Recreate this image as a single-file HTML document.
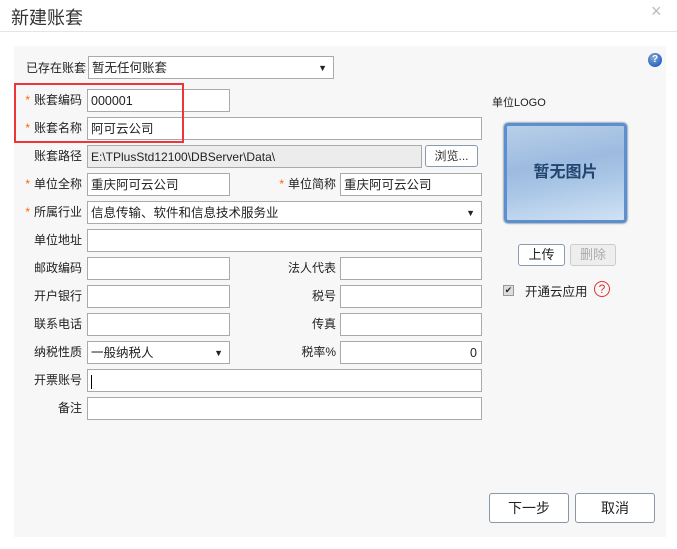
<!DOCTYPE html><html><head><meta charset="utf-8"><style>
*{box-sizing:border-box;margin:0;padding:0}
body{width:677px;height:549px;background:#fff;font-family:"Liberation Sans","Noto Sans CJK SC",sans-serif;font-size:12px;color:#222;position:relative;overflow:hidden}
.a{position:absolute}
.t{font-size:18px;color:#333;left:11px;top:4px}
.hr{left:0;top:31px;width:677px;height:1px;background:#e5e5e5}
.p{left:14px;top:46px;width:652px;height:491px;background:#f7f7f7}
.i{position:absolute;background:#fff;border:1px solid #aaa;height:23px;line-height:22px;padding-left:3px;font-size:12.5px}
.l{position:absolute;text-align:right;line-height:22px;font-size:12px;color:#222}
.s{color:#f60;margin-right:4px}
.arr{position:absolute;right:6px;top:0;font-size:9px}
.b{position:absolute;border:1px solid #8a9bb0;border-radius:3px;background:#fff;text-align:center}
</style></head><body>
<div class="a t">新建账套</div>
<div class="a" style="left:651px;top:1px;font-size:18px;color:#bbb">×</div>
<div class="a hr"></div>
<div class="a p"></div>
<div class="a" style="left:648px;top:53px;width:14px;height:14px;border-radius:50%;background:radial-gradient(circle at 40% 35%,#8ac 0,#2a66c8 70%);color:#fff;font-size:10px;font-weight:bold;text-align:center;line-height:14px">?</div>

<div class="l" style="left:14px;width:72px;top:57px">已存在账套</div>
<div class="i" style="left:88px;top:56px;width:246px">暂无任何账套<span class="arr">▼</span></div>

<div class="l" style="left:14px;width:68px;top:89px"><span class="s">*</span>账套编码</div>
<div class="i" style="left:87px;top:89px;width:143px">000001</div>
<div class="l" style="left:14px;width:68px;top:117px"><span class="s">*</span>账套名称</div>
<div class="i" style="left:87px;top:117px;width:395px">阿可云公司</div>
<div class="a" style="left:14px;top:83px;width:170px;height:60px;border:2px solid #f0353a"></div>

<div class="l" style="left:14px;width:68px;top:145px">账套路径</div>
<div class="i" style="left:87px;top:145px;width:335px;background:#ececec;font-size:12px">E:\TPlusStd12100\DBServer\Data\</div>
<div class="b" style="left:425px;top:145px;width:53px;height:22px;line-height:20px;color:#333">浏览...</div>

<div class="l" style="left:14px;width:68px;top:173px"><span class="s">*</span>单位全称</div>
<div class="i" style="left:87px;top:173px;width:143px">重庆阿可云公司</div>
<div class="l" style="left:260px;width:76px;top:173px"><span class="s">*</span>单位简称</div>
<div class="i" style="left:340px;top:173px;width:142px">重庆阿可云公司</div>

<div class="l" style="left:14px;width:68px;top:201px"><span class="s">*</span>所属行业</div>
<div class="i" style="left:87px;top:201px;width:395px">信息传输、软件和信息技术服务业<span class="arr">▼</span></div>

<div class="l" style="left:14px;width:68px;top:229px">单位地址</div>
<div class="i" style="left:87px;top:229px;width:395px"></div>

<div class="l" style="left:14px;width:68px;top:257px">邮政编码</div>
<div class="i" style="left:87px;top:257px;width:143px"></div>
<div class="l" style="left:260px;width:76px;top:257px">法人代表</div>
<div class="i" style="left:340px;top:257px;width:142px"></div>

<div class="l" style="left:14px;width:68px;top:285px">开户银行</div>
<div class="i" style="left:87px;top:285px;width:143px"></div>
<div class="l" style="left:260px;width:76px;top:285px">税号</div>
<div class="i" style="left:340px;top:285px;width:142px"></div>

<div class="l" style="left:14px;width:68px;top:313px">联系电话</div>
<div class="i" style="left:87px;top:313px;width:143px"></div>
<div class="l" style="left:260px;width:76px;top:313px">传真</div>
<div class="i" style="left:340px;top:313px;width:142px"></div>

<div class="l" style="left:14px;width:68px;top:341px">纳税性质</div>
<div class="i" style="left:87px;top:341px;width:143px">一般纳税人<span class="arr">▼</span></div>
<div class="l" style="left:260px;width:76px;top:341px">税率%</div>
<div class="i" style="left:340px;top:341px;width:142px;text-align:right;padding-right:4px">0</div>

<div class="l" style="left:14px;width:68px;top:369px">开票账号</div>
<div class="i" style="left:87px;top:369px;width:395px"><span style="display:inline-block;width:1px;height:14px;background:#000;vertical-align:middle"></span></div>
<div class="l" style="left:14px;width:68px;top:397px">备注</div>
<div class="i" style="left:87px;top:397px;width:395px"></div>

<div class="a" style="left:492px;top:94px;font-size:11px">单位LOGO</div>
<div class="a" style="left:504px;top:123px;width:123px;height:100px;border:3px solid #5c8fd0;border-radius:4px;background:linear-gradient(170deg,#b8cfe8 0,#9dbbe0 40%,#a9c6e6 60%,#d0e2f4 100%);box-shadow:0 0 2px #345;text-align:center;line-height:94px;font-size:16px;font-weight:bold;color:#23466e">暂无图片</div>
<div class="b" style="left:518px;top:244px;width:47px;height:22px;line-height:20px;font-size:13px">上传</div>
<div class="b" style="left:570px;top:244px;width:46px;height:22px;line-height:20px;font-size:13px;border-color:#ccc;background:#eee;color:#aaa">删除</div>
<div class="a" style="left:503px;top:285px;width:11px;height:11px;border:1px solid #999;background:#ddd;font-size:9px;line-height:9px;text-align:center">✔</div>
<div class="a" style="left:525px;top:281px;font-size:12.5px">开通云应用</div>
<div class="a" style="left:594px;top:281px;width:16px;height:16px;border:1px solid #d33;border-radius:50%;color:#d33;text-align:center;line-height:14px;font-size:12px">?</div>

<div class="b" style="left:489px;top:493px;width:80px;height:30px;line-height:28px;font-size:14px;border-color:#8a96a6">下一步</div>
<div class="b" style="left:575px;top:493px;width:80px;height:30px;line-height:28px;font-size:14px;border-color:#8a96a6">取消</div>
</body></html>
